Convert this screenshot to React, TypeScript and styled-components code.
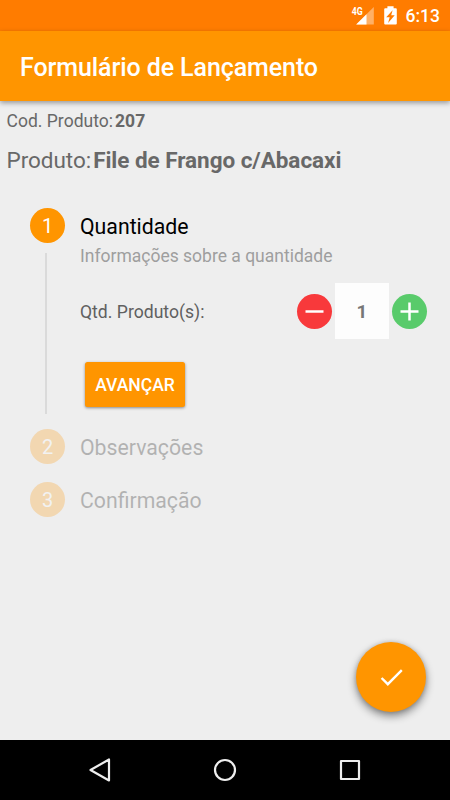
import React from 'react';
import styled, { createGlobalStyle } from 'styled-components';

const GlobalStyle = createGlobalStyle`
  * { box-sizing: border-box; }
  body { margin: 0; background: #eeeeee; }
  button { border: 0; padding: 0; font-family: inherit; color: inherit; }
`;

const Screen = styled.div`
  position: relative;
  display: flex;
  flex-direction: column;
  width: 450px;
  height: 800px;
  overflow: hidden;
  background: #eeeeee;
  font-family: Roboto, sans-serif;
`;

const StatusBar = styled.div`
  display: flex;
  justify-content: flex-end;
  flex: none;
  height: 31px;
  padding-right: 10px;
  background: #ff7c00;
  color: #fff;
`;

const StatusIcons = styled.svg`
  flex: none;
  width: 54px;
  height: 31px;
`;

const Clock = styled.span`
  width: 35px;
  padding-left: 0.5px;
  font-size: 17.5px;
  font-weight: 500;
  line-height: 33px;
  white-space: nowrap;
`;

const AppBar = styled.header`
  position: relative;
  flex: none;
  height: 70px;
  padding-left: 20px;
  background: #ff9500;
  box-shadow: 0 2px 5px rgba(0, 0, 0, 0.36);
`;

const Title = styled.h1`
  margin: 0;
  color: #fff;
  font-size: 25px;
  font-weight: 500;
  line-height: 73px;
  letter-spacing: -0.09px;
`;

const Content = styled.main`
  flex: 1;
  min-height: 0;
`;

const Field = styled.div<{ $large?: boolean }>`
  display: flex;
  gap: 2px;
  height: ${(p) => (p.$large ? 40 : 39)}px;
  padding-left: ${(p) => (p.$large ? 6.5 : 6.5)}px;
  color: #686868;
  font-size: ${(p) => (p.$large ? 22.5 : 17.5)}px;
  line-height: 40px;
  letter-spacing: ${(p) => (p.$large ? -0.04 : 0.02)}px;
`;

const Stepper = styled.div`
  display: flex;
  flex-direction: column;
  padding: 28px 23px 0 30px;
`;

const Step = styled.section<{ $height: number; $disabled?: boolean }>`
  display: grid;
  grid-template-columns: 35px 1fr;
  column-gap: 15px;
  height: ${(p) => p.$height}px;
  opacity: ${(p) => (p.$disabled ? 0.25 : 1)};
`;

const Rail = styled.div`
  display: flex;
  flex-direction: column;
  align-items: center;
`;

const StepNumber = styled.div`
  flex: none;
  width: 35px;
  height: 35px;
  border-radius: 50%;
  background: #ff9500;
  color: #fff;
  font-size: 20px;
  line-height: 37px;
  text-align: center;
`;

const Connector = styled.div`
  width: 2px;
  height: 161px;
  margin: 10px 3px 0 0;
  background: #dadada;
`;

const StepTitle = styled.h2`
  margin: 0;
  color: #000;
  font-size: 21.25px;
  font-weight: 400;
  line-height: 37px;
`;

const StepHint = styled.p`
  margin: 0;
  color: #9e9e9e;
  font-size: 17.5px;
  line-height: 22px;
`;

const QuantityRow = styled.div`
  display: flex;
  align-items: center;
  height: 56px;
  margin-top: 16px;
`;

const QuantityLabel = styled.span`
  flex: 1;
  padding-top: 2px;
  color: #606060;
  font-size: 17.6px;
`;

const RoundButton = styled.button<{ $color: string }>`
  flex: none;
  width: 35px;
  height: 35px;
  border-radius: 50%;
  background: ${(p) => p.$color};
  svg { display: block; }
`;

const QuantityValue = styled.div`
  width: 54px;
  height: 56px;
  margin: 0 3px;
  background: #fdfdfd;
  color: #777;
  font-size: 18.75px;
  font-weight: 700;
  line-height: 58px;
  text-align: center;
`;

const NextButton = styled.button`
  width: 100px;
  height: 45px;
  margin: 23px 0 0 5px;
  border-radius: 2.5px;
  background: #ff9500;
  box-shadow: 0 1px 3px rgba(0, 0, 0, 0.42);
  color: #fff;
  font-size: 17.5px;
  font-weight: 500;
  line-height: 47px;
`;

const Fab = styled.button`
  position: absolute;
  right: 24px;
  bottom: 88px;
  width: 70px;
  height: 70px;
  border-radius: 50%;
  background: #ff9500;
  box-shadow: 0 4px 8px rgba(0, 0, 0, 0.45), 0 0 4px rgba(0, 0, 0, 0.14);
  svg { display: block; }
`;

const NavBar = styled.nav`
  display: flex;
  align-items: center;
  justify-content: center;
  gap: 85px;
  flex: none;
  height: 60px;
  background: #000;
`;

const NavIcon = styled.svg`
  width: 40px;
  height: 40px;
  fill: none;
  stroke: #eeeeee;
  stroke-width: 2.2;
  stroke-linejoin: round;
`;

const NetworkLabel = styled.text`
  fill: #fff;
  font-size: 10.5px;
  font-weight: 700;
`;

export default function App() {
  return (
    <>
      <GlobalStyle />
      <Screen>
        <StatusBar>
          <StatusIcons viewBox="0 0 54 31">
            <path d="M22.8 7v17.5H5.2Z" fill="#ffb066" />
            <path d="M15.5 14.2v10.3H5.2Z" fill="#fff" />
            <NetworkLabel x="0.8" y="15" textLength="11" lengthAdjust="spacingAndGlyphs">4G</NetworkLabel>
            <path
              fillRule="evenodd"
              fill="#fff"
              d="M36.4 6.3h6.2v1.9h2.2q1 0 1 1v14.2q0 1.1-1 1.1H34.2q-1 0-1-1.1V9.2q0-1 1-1h2.2ZM41.6 10.2l-6.4 7h3.5l-1.6 5.7 6.6-7.7h-3.5Z"
            />
          </StatusIcons>
          <Clock>6:13</Clock>
        </StatusBar>
        <AppBar>
          <Title>Formulário de Lançamento</Title>
        </AppBar>
        <Content>
          <Field><span>Cod. Produto:</span><b>207</b></Field>
          <Field $large><span>Produto:</span><b>File de Frango c/Abacaxi</b></Field>
          <Stepper>
            <Step $height={221}>
              <Rail>
                <StepNumber>1</StepNumber>
                <Connector />
              </Rail>
              <div>
                <StepTitle>Quantidade</StepTitle>
                <StepHint>Informações sobre a quantidade</StepHint>
                <QuantityRow>
                  <QuantityLabel>Qtd. Produto(s):</QuantityLabel>
                  <RoundButton $color="#f8393b" aria-label="Diminuir">
                    <svg width="35" height="35"><path d="M8.5 17.5h18" stroke="#fff" strokeWidth="2.5" /></svg>
                  </RoundButton>
                  <QuantityValue>1</QuantityValue>
                  <RoundButton $color="#59cb6b" aria-label="Aumentar">
                    <svg width="35" height="35"><path d="M8.5 17.5h18M17.5 8.5v18" stroke="#fff" strokeWidth="2.5" /></svg>
                  </RoundButton>
                </QuantityRow>
                <NextButton>AVANÇAR</NextButton>
              </div>
            </Step>
            <Step $height={53} $disabled>
              <StepNumber>2</StepNumber>
              <StepTitle>Observações</StepTitle>
            </Step>
            <Step $height={53} $disabled>
              <StepNumber>3</StepNumber>
              <StepTitle>Confirmação</StepTitle>
            </Step>
          </Stepper>
        </Content>
        <NavBar>
          <NavIcon viewBox="0 0 40 40"><path d="M10.5 20 29 9.5v21Z" /></NavIcon>
          <NavIcon viewBox="0 0 40 40"><circle cx="20" cy="20" r="10" /></NavIcon>
          <NavIcon viewBox="0 0 40 40"><rect x="11" y="11" width="18" height="18" /></NavIcon>
        </NavBar>
        <Fab aria-label="Confirmar">
          <svg width="70" height="70"><path d="m25.6 36 6.2 6.2 14-14" fill="none" stroke="#fff" strokeWidth="2.4" /></svg>
        </Fab>
      </Screen>
    </>
  );
}
